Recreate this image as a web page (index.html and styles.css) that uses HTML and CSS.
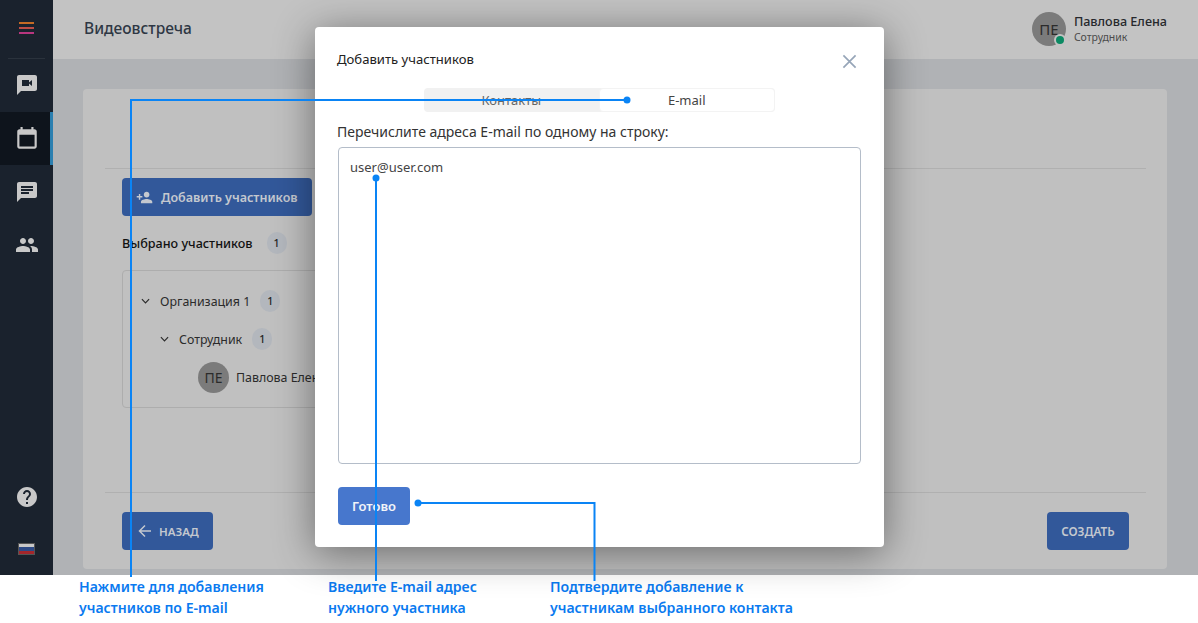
FILE: index.html
```html
<!DOCTYPE html>
<html lang="ru">
<head>
  <meta charset="UTF-8">
  <title>Видеовстреча</title>
  <link rel="stylesheet" href="styles.css">
</head>
<body>
  <div class="screen">
    <nav class="sidebar">
      <div class="burger"><span class="b1"></span><span class="b2"></span><span class="b3"></span></div>
      <div class="nav-item nav-first">
        <svg viewBox="0 0 24 24"><path d="M20 2H4c-1.1 0-2 .9-2 2v18l4-4h14c1.1 0 2-.9 2-2V4c0-1.1-.9-2-2-2zm-3 11l-3-2.4V13H7V7h7v2.4L17 7v6z"/></svg>
      </div>
      <div class="nav-item active">
        <svg viewBox="0 0 24 24"><path d="M19 3h-1V1h-2v2H8V1H6v2H5c-1.1 0-2 .9-2 2v14c0 1.1.9 2 2 2h14c1.1 0 2-.9 2-2V5c0-1.1-.9-2-2-2zm0 16H5V8h14v11z"/></svg>
      </div>
      <div class="nav-item">
        <svg viewBox="0 0 24 24"><path d="M20 2H4c-1.1 0-2 .9-2 2v18l4-4h14c1.1 0 2-.9 2-2V4c0-1.1-.9-2-2-2zM6 9h12v2H6V9zm8 5H6v-2h8v2zm4-6H6V6h12v2z"/></svg>
      </div>
      <div class="nav-item">
        <svg viewBox="0 0 24 24"><path d="M16 11c1.66 0 2.99-1.34 2.99-3S17.66 5 16 5c-1.66 0-3 1.34-3 3s1.34 3 3 3zm-8 0c1.66 0 2.99-1.34 2.99-3S9.66 5 8 5C6.34 5 5 6.34 5 8s1.34 3 3 3zm0 2c-2.33 0-7 1.17-7 3.5V19h14v-2.5c0-2.33-4.67-3.5-7-3.5zm8 0c-.29 0-.62.02-.97.05 1.16.84 1.97 1.97 1.97 3.45V19h6v-2.5c0-2.33-4.67-3.5-7-3.5z"/></svg>
      </div>
      <div class="nav-bottom">
        <svg class="help" viewBox="0 0 24 24"><path d="M12 2C6.48 2 2 6.48 2 12s4.48 10 10 10 10-4.48 10-10S17.52 2 12 2zm1 17h-2v-2h2v2zm2.07-7.75l-.9.92C13.45 12.9 13 13.5 13 15h-2v-.5c0-1.1.45-2.1 1.17-2.83l1.24-1.26c.37-.36.59-.86.59-1.41 0-1.1-.9-2-2-2s-2 .9-2 2H8c0-2.21 1.79-4 4-4s4 1.79 4 4c0 .88-.36 1.68-.93 2.25z"/></svg>
        <div class="flag"><span class="fw"></span><span class="fb"></span><span class="fr"></span></div>
      </div>
    </nav>

    <div class="main">
      <header class="topbar">
        <div class="page-title">Видеовстреча</div>
        <div class="user">
          <div class="avatar avatar-lg">ПЕ<span class="online"></span></div>
          <div>
            <div class="user-name">Павлова Елена</div>
            <div class="user-role">Сотрудник</div>
          </div>
        </div>
      </header>

      <div class="content">
        <section class="card">
          <div class="card-top"></div>
          <div class="card-body">
            <button class="btn btn-add">
              <svg viewBox="0 0 24 24"><path d="M15 12c2.21 0 4-1.79 4-4s-1.79-4-4-4-4 1.79-4 4 1.79 4 4 4zm-9-2V7H4v3H1v2h3v3h2v-3h3v-2H6zm9 4c-2.67 0-8 1.34-8 4v2h16v-2c0-2.66-5.33-4-8-4z"/></svg>
              Добавить участников
            </button>
            <div class="selected">Выбрано участников <span class="badge">1</span></div>
            <div class="tree">
              <div class="tree-row">
                <svg class="chev" viewBox="0 0 10 6"><path d="M1 1l4 4 4-4"/></svg>
                Организация 1 <span class="badge">1</span>
              </div>
              <div class="tree-row level-2">
                <svg class="chev" viewBox="0 0 10 6"><path d="M1 1l4 4 4-4"/></svg>
                Сотрудник <span class="badge">1</span>
              </div>
              <div class="tree-row level-3">
                <div class="avatar">ПЕ</div>
                Павлова Елена
              </div>
            </div>
          </div>
          <div class="card-foot">
            <button class="btn btn-back">
              <svg viewBox="0 0 16 16"><path d="M14 8H2.5M8 2.5L2.5 8 8 13.5"/></svg>
              НАЗАД
            </button>
            <button class="btn btn-create">СОЗДАТЬ</button>
          </div>
        </section>
      </div>
    </div>

    <div class="modal">
      <div class="modal-head">
        <div class="modal-title">Добавить участников</div>
        <svg class="close" viewBox="0 0 16 16"><path d="M1.5 1.5l13 13M14.5 1.5l-13 13"/></svg>
      </div>
      <div class="tabs">
        <div class="tab">Контакты</div>
        <div class="tab tab-on">E-mail</div>
      </div>
      <div class="field-label">Перечислите адреса E-mail по одному на строку:</div>
      <div class="textarea">user@user.com</div>
      <button class="btn-done">Готово</button>
    </div>

    <svg class="callouts" width="1198" height="623" viewBox="0 0 1198 623">
      <path d="M627 100H131V577M376 178V581M418 503H594.500V581"/>
      <circle cx="627" cy="100" r="3.500"/>
      <circle cx="376" cy="178" r="3.500"/>
      <circle cx="418" cy="503" r="3.500"/>
    </svg>
  </div>

  <div class="captions">
    <div class="cap cap-1">Нажмите для добавления<br>участников по E-mail</div>
    <div class="cap cap-2">Введите E-mail адрес<br>нужного участника</div>
    <div class="cap">Подтвердите добавление к<br>участникам выбранного контакта</div>
  </div>
</body>
</html>
```

FILE: styles.css
```css
* {
  box-sizing: border-box;
}

body {
  margin: 0;
  background-color: #fff;
  font-family: "Noto Sans", sans-serif;
  color: #2b2b2b;
  overflow: hidden;
}

.screen {
  position: relative;
  display: flex;
  height: 575px;
  background-color: #b0b2b5;
}

/* sidebar */
.sidebar {
  display: flex;
  flex-direction: column;
  width: 53px;
  flex-shrink: 0;
  background-color: #1a222d;
}

.burger {
  display: flex;
  flex-direction: column;
  gap: 3px;
  height: 59px;
  margin: 0 8px;
  padding: 22px 11px 0;
  border-bottom: 1px solid #2a323c;
}

.burger span {
  display: block;
  height: 2px;
}

.b1 { background-color: #c56a24; }
.b2 { background-color: #bd4d45; }
.b3 { background-color: #b8367f; }

.nav-item {
  display: flex;
  align-items: center;
  justify-content: center;
  height: 53px;
}

.nav-item svg {
  width: 24px;
  height: 24px;
  fill: #c8c8c8;
}

.nav-first {
  padding-bottom: 2px;
}

.active {
  background-color: #0e141c;
  border-right: 3px solid #2b7fb0;
  padding-left: 3px;
}

.nav-item.active svg {
  width: 26px;
  height: 26px;
}

.nav-bottom {
  display: flex;
  flex-direction: column;
  align-items: center;
  margin-top: auto;
  padding-bottom: 20px;
}

.help {
  width: 24px;
  height: 24px;
  fill: #c8c8c8;
  margin-bottom: 34px;
}

.flag {
  display: flex;
  flex-direction: column;
  width: 17px;
  height: 12px;
  border: 1px solid #555;
}

.flag span {
  flex: 1;
}

.fw { background-color: #c8c8c8; }
.fb { background-color: #2d4a86; }
.fr { background-color: #a3262b; }

/* main */
.main {
  display: flex;
  flex-direction: column;
  flex: 1;
  min-width: 0;
}

.topbar {
  display: flex;
  align-items: center;
  justify-content: space-between;
  height: 59px;
  padding: 0 31px 2px 31px;
  background-color: #c3c3c3;
}

.page-title {
  font-size: 15.500px;
  font-weight: 500;
  color: #2e3744;
  margin-top: -2px;
}

.user {
  display: flex;
  align-items: center;
  gap: 8px;
}

.avatar {
  display: flex;
  align-items: center;
  justify-content: center;
  position: relative;
  width: 31px;
  height: 31px;
  border-radius: 50%;
  background-color: #7b7b7b;
  font-size: 14px;
  color: #2b2b2b;
  flex-shrink: 0;
}

.avatar-lg {
  width: 34px;
  height: 34px;
  font-size: 15px;
}

.online {
  position: absolute;
  right: 2px;
  bottom: 2px;
  width: 8px;
  height: 8px;
  border-radius: 50%;
  background-color: #0b8a63;
  box-shadow: 0 0 0 2px #c3c3c3;
}

.user-name {
  font-size: 12.600px;
  font-weight: 500;
  line-height: 16px;
  color: #26282c;
}

.user-role {
  font-size: 10.500px;
  line-height: 14px;
  color: #4c4c4c;
}

.content {
  flex: 1;
  padding: 30px 31px 6px 30px;
}

.card {
  display: flex;
  flex-direction: column;
  height: 100%;
  background-color: #c0c0c0;
  border-radius: 4px;
  padding: 0 21px 0 22px;
}

.card-top {
  height: 80px;
  border-bottom: 1px solid #b0b0b0;
}

.card-body {
  flex: 1;
  padding: 9px 17px 0;
  border-bottom: 1px solid #b0b0b0;
}

.btn {
  display: inline-flex;
  align-items: center;
  height: 38px;
  border: none;
  border-radius: 4px;
  background-color: #32589a;
  color: #c4c8cf;
  font-family: inherit;
  font-weight: 600;
}

.btn-add {
  width: 190px;
  padding: 0 0 0 14px;
  font-size: 12.500px;
  gap: 8px;
}

.btn-add svg {
  width: 17px;
  height: 17px;
  fill: #c4c8cf;
}

.selected {
  display: flex;
  align-items: center;
  gap: 14px;
  height: 22px;
  margin-top: 16px;
  font-size: 12.600px;
  font-weight: 500;
  color: #111;
}

.badge {
  display: flex;
  align-items: center;
  justify-content: center;
  width: 20px;
  height: 22px;
  border-radius: 10px;
  background-color: #b3b7bd;
  font-size: 10.500px;
  font-weight: 500;
  color: #222;
}

.tree {
  width: 400px;
  height: 138px;
  margin-top: 16px;
  padding-top: 11px;
  border: 1px solid #adadad;
  border-radius: 4px;
}

.tree-row {
  display: flex;
  align-items: center;
  height: 38px;
  padding-left: 18px;
  font-size: 12.400px;
  gap: 10px;
  white-space: nowrap;
}

.level-2 {
  padding-left: 37px;
}

.level-3 {
  padding-left: 75px;
  gap: 7px;
}

.chev {
  width: 9px;
  height: 6px;
  fill: none;
  stroke: #2b2b2b;
  stroke-width: 1.300;
}

.card-foot {
  display: flex;
  justify-content: space-between;
  padding: 19px 17px 19px;
}

.btn-back {
  width: 91px;
  padding-left: 15px;
  font-size: 11.500px;
  gap: 6px;
}

.btn-back svg {
  width: 16px;
  height: 16px;
  fill: none;
  stroke: #c4c8cf;
  stroke-width: 1.500;
}

.btn-create {
  justify-content: center;
  width: 82px;
  font-size: 11.800px;
}

/* modal */
.modal {
  position: absolute;
  left: 315px;
  top: 27px;
  display: flex;
  flex-direction: column;
  width: 569px;
  height: 520px;
  padding: 0 23px 0 22px;
  background-color: #fff;
  border-radius: 4px;
  box-shadow: 0 6px 40px rgba(0, 0, 0, .45);
}

.modal-head {
  display: flex;
  align-items: center;
  justify-content: space-between;
  height: 61px;
  padding-right: 4px;
}

.modal-title {
  font-size: 13.100px;
  font-weight: 400;
  color: #222;
  margin-top: 2px;
}

.close {
  width: 15px;
  height: 15px;
  margin-top: 8px;
  fill: none;
  stroke: #96a5b8;
  stroke-width: 1.800;
}

.tabs {
  display: flex;
  width: 351px;
  height: 24px;
  margin-left: 87px;
  background-color: #f1f1f1;
  border-radius: 4px;
}

.tab {
  flex: 1;
  text-align: center;
  font-size: 13px;
  line-height: 24px;
  color: #666;
}

.tab-on {
  background-color: #fff;
  border: 1px solid #f3f3f3;
  border-radius: 4px;
  line-height: 22px;
  color: #444;
}

.field-label {
  margin-top: 11px;
  font-size: 14px;
  line-height: 18px;
  color: #333;
}

.textarea {
  height: 317px;
  margin-top: 6px;
  margin-left: 1px;
  padding: 9px 11px;
  border: 1px solid #b4bdc9;
  border-radius: 4px;
  font-size: 13px;
  line-height: 20px;
  color: #444;
}

.btn-done {
  width: 72px;
  height: 38px;
  margin-top: 23px;
  margin-left: 1px;
  border: none;
  border-radius: 4px;
  background-color: #4777cd;
  color: #f2f4f8;
  font-family: inherit;
  font-size: 13px;
  font-weight: 600;
}

/* annotation lines over everything */
.callouts {
  position: absolute;
  left: 0;
  top: 0;
  overflow: visible;
  pointer-events: none;
}

.callouts path {
  fill: none;
  stroke: #0a84f5;
  stroke-width: 2;
}

.callouts circle {
  fill: #0a84f5;
}

.captions {
  display: flex;
  padding: 2px 0 0 79px;
}

.cap {
  font-size: 14.100px;
  font-weight: 600;
  line-height: 20.500px;
  color: #0a7af0;
  white-space: nowrap;
}

.cap-1 {
  width: 249px;
}

.cap-2 {
  width: 222px;
}
```
